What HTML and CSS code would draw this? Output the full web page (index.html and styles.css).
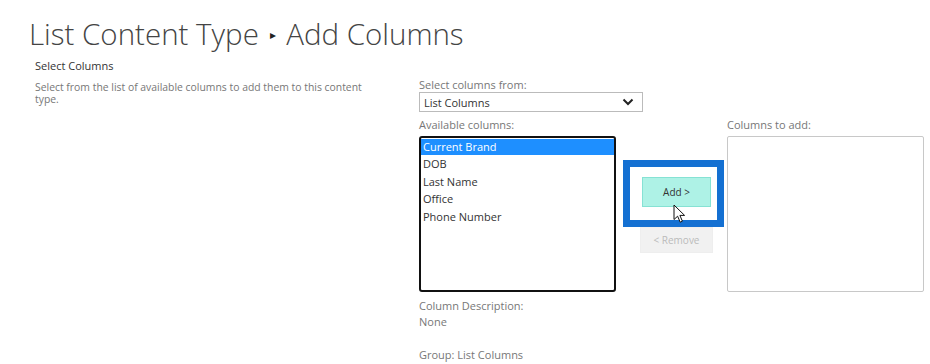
FILE: index.html
```html
<!DOCTYPE html>
<html lang="en">
<head>
    <meta charset="UTF-8">
    <meta name="viewport" content="width=device-width, initial-scale=1.0">
    <title>Add Columns</title>
    <link rel="stylesheet" href="styles.css">
</head>
<body>
    <div class="page">
        <h1 class="page-title">List Content Type <span class="crumb-arrow">&#9656;</span> Add Columns</h1>

        <div class="section">
            <div class="section-info">
                <h3>Select Columns</h3>
                <p>Select from the list of available columns to add them to this content type.</p>
            </div>

            <div class="section-body">
                <label class="field-label" for="group-select">Select columns from:</label>
                <div class="select-box" id="group-select">
                    <span>List Columns</span>
                    <svg class="chevron" width="12" height="8" viewBox="0 0 12 8">
                        <path d="M1.5 1.5 L6 6 L10.5 1.5" fill="none" stroke="#222" stroke-width="2"/>
                    </svg>
                </div>

                <div class="picker">
                    <div class="picker-col">
                        <div class="field-label">Available columns:</div>
                        <div class="listbox available">
                            <div class="option selected">Current Brand</div>
                            <div class="option">DOB</div>
                            <div class="option">Last Name</div>
                            <div class="option">Office</div>
                            <div class="option">Phone Number</div>
                        </div>
                        <div class="column-info">
                            <div>Column Description:</div>
                            <div>None</div>
                            <div class="group-line">Group: List Columns</div>
                        </div>
                    </div>

                    <div class="picker-buttons">
                        <div class="add-wrap">
                            <button class="btn btn-add" type="button">Add &gt;</button>
                            <div class="highlight"></div>
                            <svg class="cursor" width="14" height="20" viewBox="0 0 14 20">
                                <path d="M1 1 L1 15.5 L4.6 12.2 L7.2 18.2 L9.4 17.2 L6.9 11.4 L11.6 11.4 Z" fill="#fff" stroke="#111" stroke-width="1" stroke-linejoin="round"/>
                            </svg>
                        </div>
                        <button class="btn btn-remove" type="button" disabled>&lt; Remove</button>
                    </div>

                    <div class="picker-col">
                        <div class="field-label">Columns to add:</div>
                        <div class="listbox chosen"></div>
                    </div>
                </div>
            </div>
        </div>
    </div>
</body>
</html>
```

FILE: styles.css
```css
body {
    margin: 0;
    font-family: "Open Sans", "Noto Sans", sans-serif;
    background-color: #fff;
    color: #444;
}
.page {
    padding: 14px 0 0 29px;
}
.page-title {
    margin: 0;
    font-size: 29.5px;
    font-weight: 300;
    color: #444;
    line-height: 40px;
}
.crumb-arrow {
    display: inline-block;
    font-size: 12px;
    color: #222;
    vertical-align: middle;
    margin: 0 3px;
    position: relative;
    top: -2px;
}
.section {
    display: flex;
}
.section-info {
    width: 330px;
    padding-left: 6px;
    margin-right: 54px;
}
.section-info h3 {
    margin: 1px 0 0;
    font-size: 11px;
    font-weight: 400;
    color: #333;
    line-height: 16px;
}
.section-info p {
    margin: 7px 0 0;
    font-size: 10.4px;
    color: #777;
    line-height: 12px;
}
.section-body {
    padding-top: 21px;
}
.field-label {
    display: block;
    font-size: 11px;
    color: #777;
    line-height: 14px;
}
.select-box {
    height: 18px;
    border: 1px solid #bbb;
    display: flex;
    align-items: center;
    justify-content: space-between;
    padding: 0 8px 0 4px;
    width: 210px;
    font-size: 11px;
    color: #333;
    margin: 0 0 6px;
}
.picker {
    display: flex;
}
.listbox {
    width: 197px;
    height: 156px;
    box-sizing: border-box;
    margin-top: 4px;
}
.listbox.available {
    border: 2px solid #111;
    border-radius: 3px;
    padding: 1px 0;
}
.listbox.chosen {
    border: 1px solid #c8c8c8;
    border-radius: 2px;
}
.option {
    font-size: 11px;
    color: #333;
    line-height: 17.5px;
    padding-left: 2px;
}
.option.selected {
    background-color: #1e8fff;
    color: #fff;
    line-height: 16px;
}
.column-info {
    margin-top: 6px;
    font-size: 11px;
    color: #777;
    line-height: 16px;
}
.group-line {
    margin-top: 17px;
}
.picker-buttons {
    width: 111px;
    padding-left: 24px;
    box-sizing: border-box;
    padding-top: 57px;
}
.add-wrap {
    position: relative;
    width: 73px;
    height: 34px;
    display: flex;
    align-items: center;
    justify-content: center;
}
.btn {
    font-family: "Open Sans", "Noto Sans", sans-serif;
    font-size: 10px;
    border: 1px solid #ddd;
    padding: 0;
}
.btn-add {
    width: 69px;
    height: 30px;
    background-color: #aef2e6;
    border-color: #86e2d4;
    color: #333;
}
.btn-remove {
    display: block;
    width: 73px;
    height: 26px;
    margin-top: 18px;
    background-color: #f1f1f1;
    border-color: #eee;
    color: #bbb;
}
.highlight {
    position: absolute;
    left: -17px;
    top: -15px;
    width: 87px;
    height: 53px;
    border: 7px solid #1470d2;
}
.cursor {
    position: absolute;
    left: 33px;
    top: 29px;
}
```
